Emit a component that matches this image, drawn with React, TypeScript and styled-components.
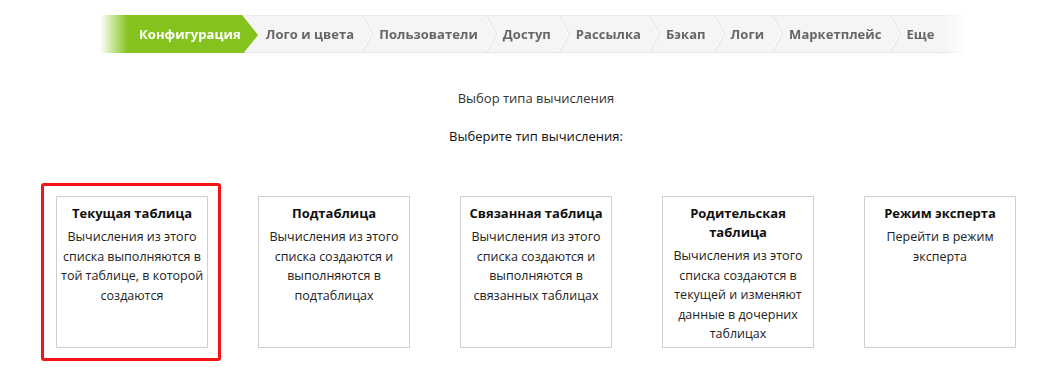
import React from "react";
import styled, { createGlobalStyle } from "styled-components";

const Global = createGlobalStyle`
  html, body { margin: 0; padding: 0; background: #fff; }
  body { font-family: "Open Sans", "Noto Sans", "Liberation Sans", sans-serif; color: #222; }
`;

const Page = styled.div`
  width: 960px;
  margin-left: 56px;
  padding-top: 15px;
  padding-bottom: 30px;
`;

const Bar = styled.nav`
  display: flex;
  align-items: stretch;
  height: 38px;
  width: 868px;
  margin-left: 44px;
  box-sizing: border-box;
  background: #f5f5f5;
  border-top: 1px solid #ececec;
  border-bottom: 1px solid #e6e6e6;
  -webkit-mask-image: linear-gradient(to right, transparent 0, #000 28px, #000 calc(100% - 26px), transparent 100%);
  mask-image: linear-gradient(to right, transparent 0, #000 28px, #000 calc(100% - 26px), transparent 100%);
`;

const Tab = styled.div<{ $active?: boolean }>`
  display: flex;
  align-items: center;
  font-size: 13px;
  font-weight: 700;
  letter-spacing: 0.05px;
  color: ${(p) => (p.$active ? "#fff" : "#666")};
  background: ${(p) => (p.$active ? "#84c31e" : "transparent")};
  padding: ${(p) => (p.$active ? "0 1px 0 39px" : "0")};
  margin: ${(p) => (p.$active ? "-1px 0" : "0")};
  white-space: nowrap;
`;

const Tip = styled.svg`
  display: block;
  flex: none;
  width: 16px;
  height: 40px;
  margin: -1px 8px -1px 0;
`;

const Sep = styled.svg`
  display: block;
  flex: none;
  width: 11px;
  height: 36px;
  margin: 0 6px 0 8px;
`;

const Heading = styled.div`
  text-align: center;
  font-size: 13px;
  line-height: 20px;
  color: #333;
  margin-top: 35px;
`;

const Prompt = styled.div`
  text-align: center;
  font-size: 13px;
  line-height: 20px;
  color: #111;
  margin-top: 18px;
`;

const Cards = styled.div`
  display: flex;
  gap: 50px;
  margin-top: 50px;
`;

const Card = styled.div<{ $selected?: boolean }>`
  position: relative;
  box-sizing: border-box;
  width: 152px;
  height: 152px;
  border: 1px solid #cfcfcf;
  padding: 7px 4px 0;
  text-align: center;
  cursor: pointer;
  &::before {
    content: "";
    display: ${(p) => (p.$selected ? "block" : "none")};
    position: absolute;
    left: -16px;
    right: -14px;
    top: -14px;
    bottom: -14px;
    border: 3px solid #f31414;
    border-radius: 3px;
  }
`;

const Title = styled.div`
  font-size: 13px;
  font-weight: 700;
  line-height: 19px;
  color: #111;
  margin-bottom: 4px;
`;

const Line = styled.div`
  font-size: 12.5px;
  line-height: 19.5px;
  color: #222;
  white-space: nowrap;
`;

const tabs = [
  "Конфигурация",
  "Лого и цвета",
  "Пользователи",
  "Доступ",
  "Рассылка",
  "Бэкап",
  "Логи",
  "Маркетплейс",
  "Еще",
];

const cards: { title: string[]; lines: string[]; selected?: boolean }[] = [
  {
    title: ["Текущая таблица"],
    lines: ["Вычисления из этого", "списка выполняются в", "той таблице, в которой", "создаются"],
    selected: true,
  },
  {
    title: ["Подтаблица"],
    lines: ["Вычисления из этого", "списка создаются и", "выполняются в", "подтаблицах"],
  },
  {
    title: ["Связанная таблица"],
    lines: ["Вычисления из этого", "списка создаются и", "выполняются в", "связанных таблицах"],
  },
  {
    title: ["Родительская", "таблица"],
    lines: ["Вычисления из этого", "списка создаются в", "текущей и изменяют", "данные в дочерних", "таблицах"],
  },
  {
    title: ["Режим эксперта"],
    lines: ["Перейти в режим", "эксперта"],
  },
];

export default function App() {
  return (
    <>
      <Global />
      <Page>
        <Bar>
          {tabs.map((t, i) => (
            <React.Fragment key={t}>
              <Tab $active={i === 0}>{t}</Tab>
              {i === 0 ? (
                <Tip viewBox="0 0 16 40" preserveAspectRatio="none">
                  <polygon points="0,0 16,20 0,40" fill="#84c31e" />
                </Tip>
              ) : i < tabs.length - 1 ? (
                <Sep viewBox="0 0 11 36" preserveAspectRatio="none">
                  <polyline points="0.5,0 10.5,18 0.5,36" fill="none" stroke="#dedede" strokeWidth="1" />
                  <polyline points="-0.5,0 9.5,18 -0.5,36" fill="none" stroke="#ffffff" strokeWidth="1" />
                </Sep>
              ) : null}
            </React.Fragment>
          ))}
        </Bar>
        <Heading>Выбор типа вычисления</Heading>
        <Prompt>Выберите тип вычисления:</Prompt>
        <Cards>
          {cards.map((c) => (
            <Card key={c.title.join(" ")} $selected={c.selected}>
              <Title>
                {c.title.map((l) => (
                  <div key={l}>{l}</div>
                ))}
              </Title>
              {c.lines.map((l) => (
                <Line key={l}>{l}</Line>
              ))}
            </Card>
          ))}
        </Cards>
      </Page>
    </>
  );
}
